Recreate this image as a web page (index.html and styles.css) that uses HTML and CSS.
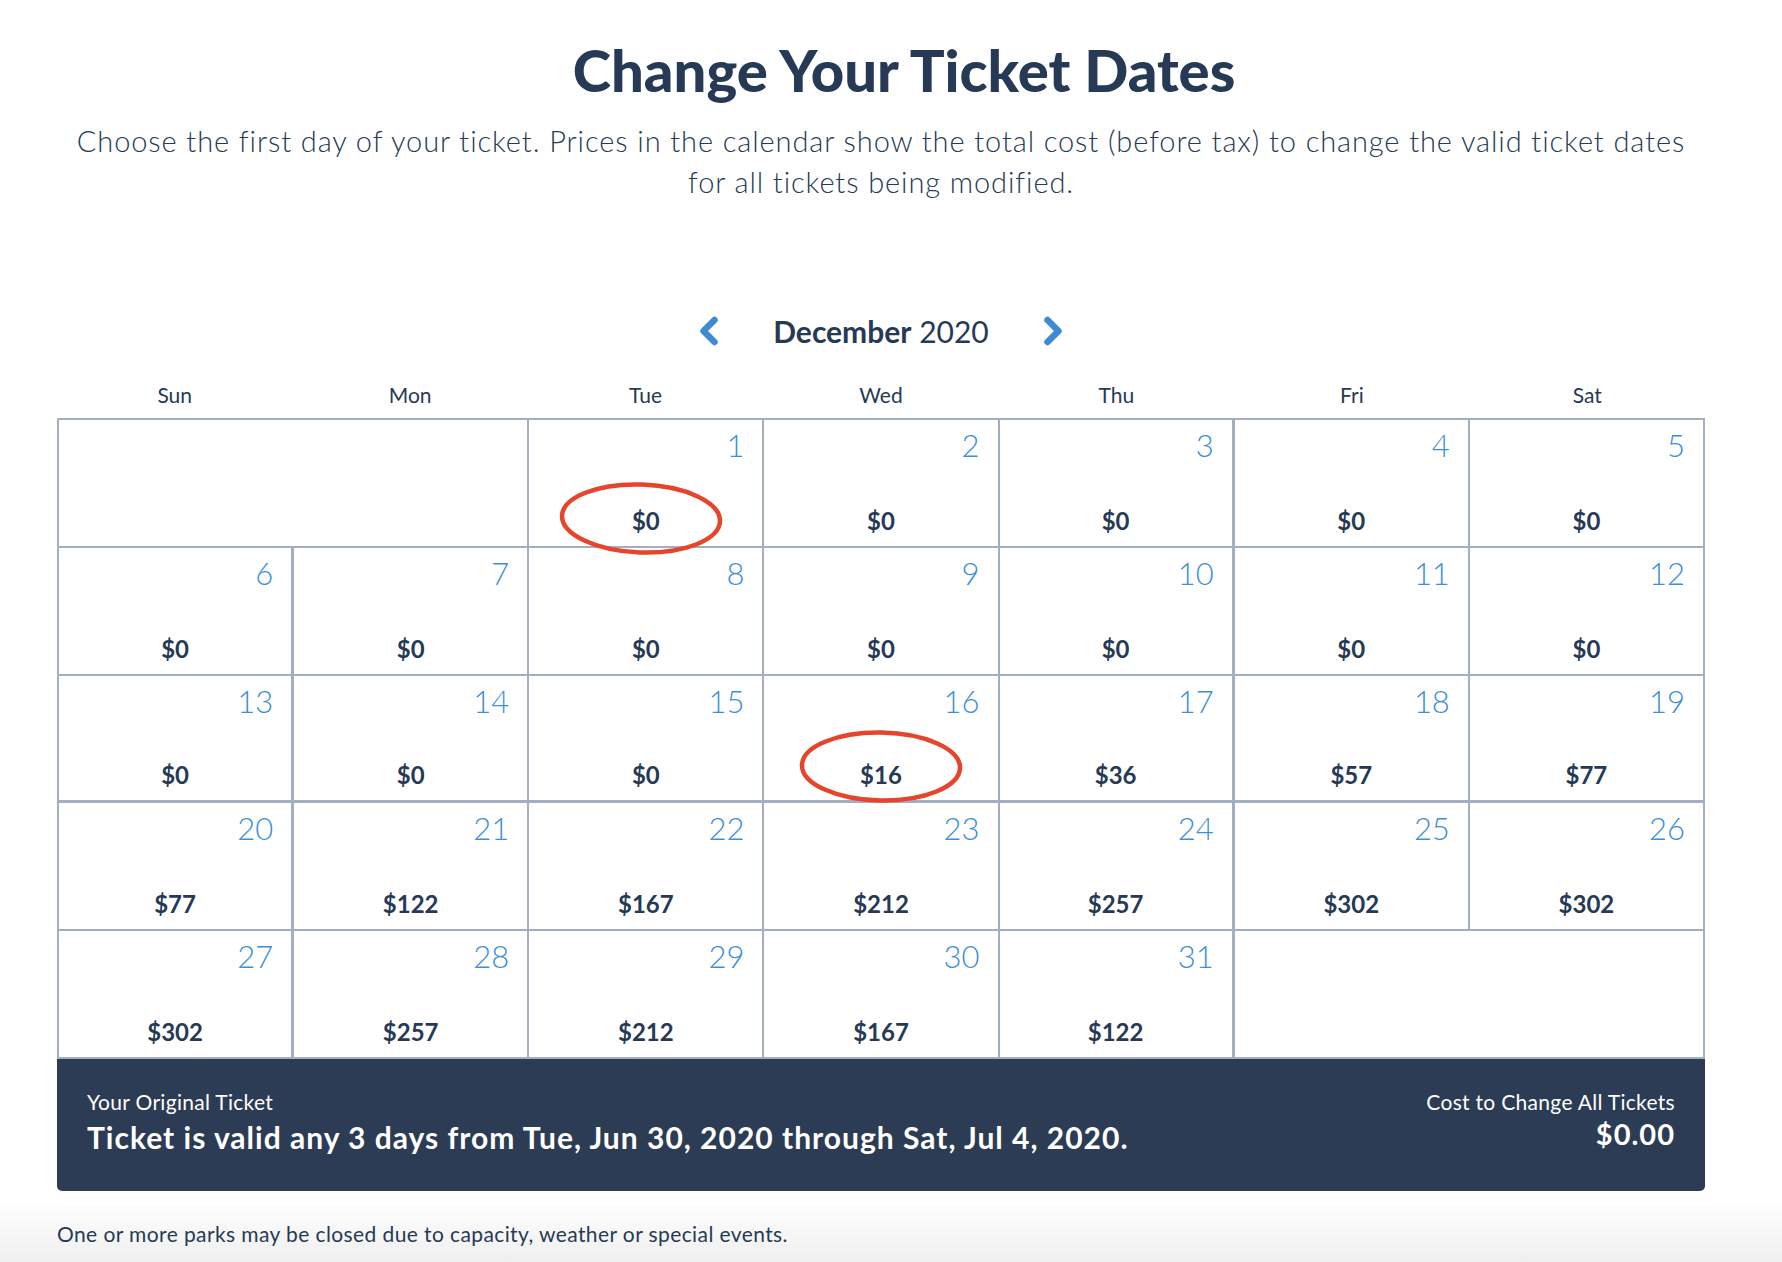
FILE: index.html
```html
<!DOCTYPE html>
<html lang="en">
<head>
<meta charset="utf-8">
<title>Change Your Ticket Dates</title>
<link rel="stylesheet" href="styles.css">
</head>
<body>
<main class="page">
  <h1 class="title">Change Your Ticket Dates</h1>
  <p class="intro">Choose the first day of your ticket. Prices in the calendar show the total cost (before tax) to change the valid ticket dates for all tickets being modified.</p>

  <div class="month-nav">
    <button class="nav-btn" aria-label="Previous month">
      <svg width="20" height="30" viewBox="0 0 20 30"><path d="M15.5 4 L4.5 15 L15.5 26" fill="none" stroke="#3d8bd3" stroke-width="6.5" stroke-linecap="round" stroke-linejoin="round"/></svg>
    </button>
    <div class="month-label"><strong>December</strong> 2020</div>
    <button class="nav-btn" aria-label="Next month">
      <svg width="20" height="30" viewBox="0 0 20 30"><path d="M4.5 4 L15.5 15 L4.5 26" fill="none" stroke="#3d8bd3" stroke-width="6.5" stroke-linecap="round" stroke-linejoin="round"/></svg>
    </button>
  </div>

  <div class="weekdays">
    <div>Sun</div><div>Mon</div><div>Tue</div><div>Wed</div><div>Thu</div><div>Fri</div><div>Sat</div>
  </div>

  <div class="calendar">
    <div class="grid">
      <div class="cell empty span2 r1"></div>
      <div class="cell r1"><span class="num">1</span><span class="price">$0</span></div>
      <div class="cell r1"><span class="num">2</span><span class="price">$0</span></div>
      <div class="cell r1 thu"><span class="num">3</span><span class="price">$0</span></div>
      <div class="cell r1"><span class="num">4</span><span class="price">$0</span></div>
      <div class="cell r1"><span class="num">5</span><span class="price">$0</span></div>

      <div class="cell sun"><span class="num">6</span><span class="price">$0</span></div>
      <div class="cell"><span class="num">7</span><span class="price">$0</span></div>
      <div class="cell"><span class="num">8</span><span class="price">$0</span></div>
      <div class="cell"><span class="num">9</span><span class="price">$0</span></div>
      <div class="cell thu"><span class="num">10</span><span class="price">$0</span></div>
      <div class="cell"><span class="num">11</span><span class="price">$0</span></div>
      <div class="cell"><span class="num">12</span><span class="price">$0</span></div>

      <div class="cell sun r3"><span class="num">13</span><span class="price">$0</span></div>
      <div class="cell r3"><span class="num">14</span><span class="price">$0</span></div>
      <div class="cell r3"><span class="num">15</span><span class="price">$0</span></div>
      <div class="cell r3"><span class="num">16</span><span class="price">$16</span></div>
      <div class="cell thu r3"><span class="num">17</span><span class="price">$36</span></div>
      <div class="cell r3"><span class="num">18</span><span class="price">$57</span></div>
      <div class="cell r3"><span class="num">19</span><span class="price">$77</span></div>

      <div class="cell sun"><span class="num">20</span><span class="price">$77</span></div>
      <div class="cell"><span class="num">21</span><span class="price">$122</span></div>
      <div class="cell"><span class="num">22</span><span class="price">$167</span></div>
      <div class="cell"><span class="num">23</span><span class="price">$212</span></div>
      <div class="cell thu"><span class="num">24</span><span class="price">$257</span></div>
      <div class="cell"><span class="num">25</span><span class="price">$302</span></div>
      <div class="cell"><span class="num">26</span><span class="price">$302</span></div>

      <div class="cell sun"><span class="num">27</span><span class="price">$302</span></div>
      <div class="cell"><span class="num">28</span><span class="price">$257</span></div>
      <div class="cell"><span class="num">29</span><span class="price">$212</span></div>
      <div class="cell"><span class="num">30</span><span class="price">$167</span></div>
      <div class="cell thu"><span class="num">31</span><span class="price">$122</span></div>
      <div class="cell empty span2"></div>
    </div>

    <svg class="mark mark-1" width="166" height="77" viewBox="0 0 166 77"><ellipse cx="83" cy="38.5" rx="79" ry="34" fill="none" stroke="#e6452b" stroke-width="4.5" transform="rotate(2 83 38.5)"/></svg>
    <svg class="mark mark-2" width="166" height="77" viewBox="0 0 166 77"><ellipse cx="83" cy="38.5" rx="79" ry="34" fill="none" stroke="#e6452b" stroke-width="4.5" transform="rotate(1 83 38.5)"/></svg>
  </div>

  <section class="summary">
    <div class="summary-left">
      <div class="summary-label">Your Original Ticket</div>
      <div class="summary-value">Ticket is valid any 3 days from Tue, Jun 30, 2020 through Sat, Jul 4, 2020.</div>
    </div>
    <div class="summary-right">
      <div class="summary-label">Cost to Change All Tickets</div>
      <div class="summary-total">$0.00</div>
    </div>
  </section>

  <p class="note">One or more parks may be closed due to capacity, weather or special events.</p>
</main>
</body>
</html>
```

FILE: styles.css
```css
html {
  min-height: 100%;
  background: linear-gradient(to bottom, #ffffff 0, #ffffff calc(100% - 62px), #efefef 100%);
}

body {
  margin: 0;
  font-family: "Lato", "Noto Sans", sans-serif;
  color: #263a55;
}

.page {
  width: 1648px;
  margin-left: 57px;
  padding-top: 36px;
  padding-bottom: 14px;
}

.title {
  margin: 0;
  padding-left: 46px;
  text-align: center;
  font-size: 58px;
  line-height: 68px;
  font-weight: 900;
  color: #263a55;
}

.intro {
  margin: 16px auto 0;
  max-width: 1610px;
  text-align: center;
  font-size: 29px;
  line-height: 41px;
  font-weight: 300;
  letter-spacing: 0.9px;
}

.month-nav {
  margin-top: 111px;
  display: flex;
  justify-content: center;
  align-items: center;
  gap: 54px;
  height: 36px;
}

.nav-btn {
  padding: 0;
  border: 0;
  background: none;
  display: flex;
  align-items: center;
}

.month-label {
  font-size: 30px;
  line-height: 36px;
}

.month-label strong {
  font-weight: 700;
}

.weekdays {
  margin-top: 34px;
  display: grid;
  grid-template-columns: repeat(7, 1fr);
  font-size: 21px;
  line-height: 24px;
  text-align: center;
  height: 35px;
}

.calendar {
  position: relative;
}

.grid {
  display: grid;
  grid-template-columns: repeat(7, 1fr);
  grid-auto-rows: 127.8px;
  border-left: 2px solid #a3afc1;
  border-top: 2px solid #a3afc1;
}

.cell {
  box-sizing: border-box;
  border-right: 2px solid #a3afc1;
  border-bottom: 2px solid #a3afc1;
  display: flex;
  flex-direction: column;
  justify-content: space-between;
  padding: 7px 18px 12px;
}

.cell.sun { border-right-width: 3px; }
.cell.thu { border-right-width: 3px; }
.cell.r3 { border-bottom-width: 3px; }
.cell.span2 { grid-column: span 2; }

.num {
  align-self: flex-end;
  font-size: 31px;
  line-height: 36px;
  font-weight: 300;
  color: #3d8fd8;
}

.price {
  align-self: center;
  font-size: 24px;
  line-height: 26px;
  font-weight: 700;
  color: #263a55;
}

.mark {
  position: absolute;
  pointer-events: none;
}

.mark-1 { left: 501px; top: 62px; }
.mark-2 { left: 741px; top: 310px; }

.summary {
  display: flex;
  justify-content: space-between;
  align-items: flex-start;
  background: #2c3c54;
  color: #ffffff;
  border-radius: 0 0 5px 5px;
  padding: 31px 30px 34px 30px;
  height: 132px;
  box-sizing: border-box;
}

.summary-label {
  font-size: 21px;
  line-height: 24px;
  letter-spacing: 0.3px;
}

.summary-value {
  margin-top: 6px;
  font-size: 30px;
  line-height: 34px;
  font-weight: 700;
  letter-spacing: 1px;
}

.summary-right {
  text-align: right;
}

.summary-total {
  margin-top: 4px;
  font-size: 29px;
  line-height: 32px;
  font-weight: 700;
  letter-spacing: 1px;
}

.note {
  margin: 31px 0 0;
  font-size: 21px;
  line-height: 24px;
  letter-spacing: 0.4px;
}
```
